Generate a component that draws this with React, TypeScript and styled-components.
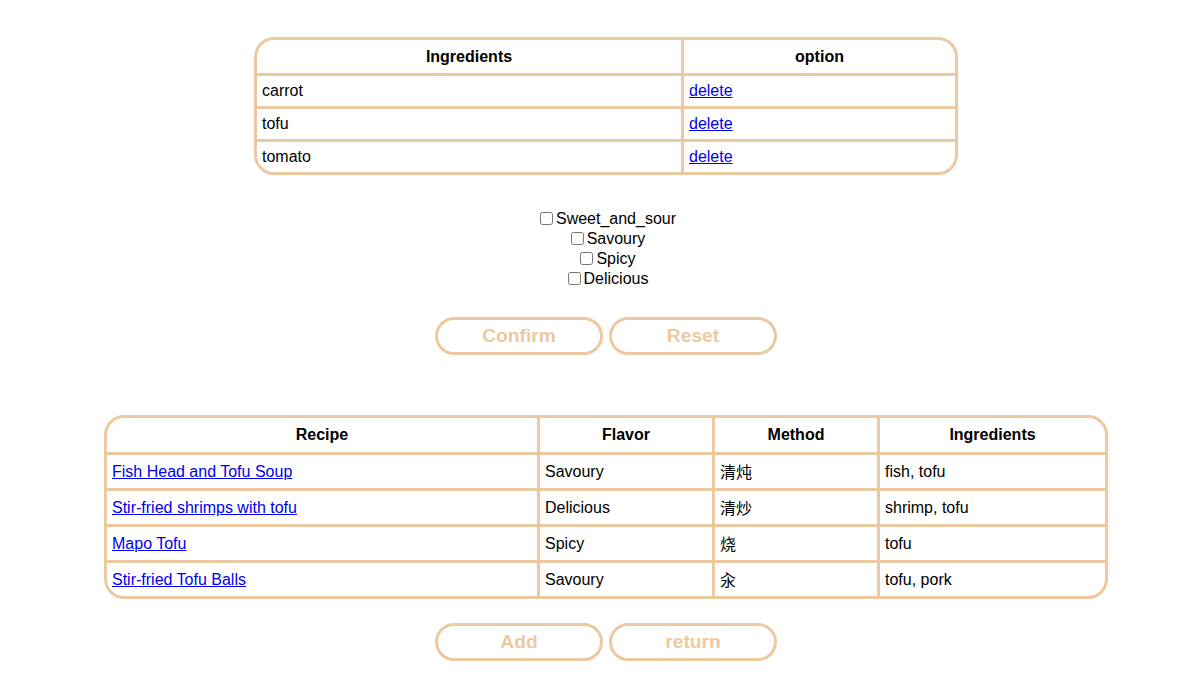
import React, { useState } from 'react';
import styled, { createGlobalStyle } from 'styled-components';

const beige = '#ecc9a1';

const GlobalStyle = createGlobalStyle`
  body {
    margin: 0;
    background: #fff;
    font-family: "Liberation Sans", Arial, "Noto Sans CJK SC", sans-serif;
    font-size: 16px;
    color: #000;
  }
`;

const Page = styled.div`
  display: flex;
  flex-direction: column;
  align-items: center;
  padding: 37px 0 16px 24px;
`;

const Table = styled.table<{ width: number }>`
  width: ${({ width }) => width}px;
  border: 3px solid ${beige};
  border-radius: 20px;
  border-spacing: 0;
  border-collapse: separate;
  table-layout: fixed;
  overflow: hidden;
`;

const HeadCell = styled.th<{ height: number }>`
  height: ${({ height }) => height}px;
  padding: 0 5px;
  font-weight: bold;
  text-align: center;
  border-right: 3px solid ${beige};
  border-bottom: 3px solid ${beige};

  &:last-child {
    border-right: none;
  }
`;

const Cell = styled.td<{ height: number }>`
  height: ${({ height }) => height}px;
  padding: 0 5px;
  text-align: left;
  border-right: 3px solid ${beige};
  border-bottom: 3px solid ${beige};

  &:last-child {
    border-right: none;
  }

  tr:last-child > & {
    border-bottom: none;
  }
`;

const Hanzi = styled.span`
  position: relative;
  top: -1px;
`;

const Link = styled.a`
  color: #0000ee;
  text-decoration: underline;
  cursor: pointer;
`;

const FlavorList = styled.div`
  margin-top: 34px;
  display: flex;
  flex-direction: column;
  align-items: center;
`;

const FlavorLabel = styled.label`
  display: block;
  line-height: 20px;
  height: 20px;
  text-align: center;

  input {
    margin: 3px 3px 3px 4px;
    vertical-align: -1px;
  }
`;

const ButtonRow = styled.div<{ top: number }>`
  display: flex;
  gap: 6px;
  margin-top: ${({ top }) => top}px;
`;

const PillButton = styled.button`
  width: 168px;
  height: 38px;
  border: 3px solid ${beige};
  border-radius: 20px;
  background: #fff;
  color: ${beige};
  font-family: "Liberation Sans", Arial, sans-serif;
  font-size: 19.2px;
  font-weight: bold;
  cursor: pointer;
  padding: 0;
`;

const BottomTableWrap = styled.div`
  margin-top: 60px;
`;

const flavors = ['Sweet_and_sour', 'Savoury', 'Spicy', 'Delicious'];

const recipes = [
  { name: 'Fish Head and Tofu Soup', flavor: 'Savoury', method: '清炖', ingredients: 'fish, tofu' },
  { name: 'Stir-fried shrimps with tofu', flavor: 'Delicious', method: '清炒', ingredients: 'shrimp, tofu' },
  { name: 'Mapo Tofu', flavor: 'Spicy', method: '烧', ingredients: 'tofu' },
  { name: 'Stir-fried Tofu Balls', flavor: 'Savoury', method: '汆', ingredients: 'tofu, pork' },
];

export default function App() {
  const [items, setItems] = useState(['carrot', 'tofu', 'tomato']);
  const [checked, setChecked] = useState<string[]>([]);

  const toggle = (f: string) =>
    setChecked(checked.includes(f) ? checked.filter((c) => c !== f) : [...checked, f]);

  return (
    <>
      <GlobalStyle />
      <Page>
        <Table width={704}>
          <colgroup>
            <col style={{ width: 427 }} />
            <col />
          </colgroup>
          <thead>
            <tr>
              <HeadCell height={33}>Ingredients</HeadCell>
              <HeadCell height={33}>option</HeadCell>
            </tr>
          </thead>
          <tbody>
            {items.map((item) => (
              <tr key={item}>
                <Cell height={30}>{item}</Cell>
                <Cell height={30}>
                  <Link onClick={() => setItems(items.filter((i) => i !== item))}>delete</Link>
                </Cell>
              </tr>
            ))}
          </tbody>
        </Table>

        <FlavorList>
          {flavors.map((f) => (
            <FlavorLabel key={f}>
              <input type="checkbox" checked={checked.includes(f)} onChange={() => toggle(f)} />
              {f}
            </FlavorLabel>
          ))}
        </FlavorList>

        <ButtonRow top={28}>
          <PillButton>Confirm</PillButton>
          <PillButton onClick={() => setChecked([])}>Reset</PillButton>
        </ButtonRow>

        <BottomTableWrap>
          <Table width={1004}>
            <colgroup>
              <col style={{ width: 433 }} />
              <col style={{ width: 175 }} />
              <col style={{ width: 165 }} />
              <col />
            </colgroup>
            <thead>
              <tr>
                <HeadCell height={34}>Recipe</HeadCell>
                <HeadCell height={34}>Flavor</HeadCell>
                <HeadCell height={34}>Method</HeadCell>
                <HeadCell height={34}>Ingredients</HeadCell>
              </tr>
            </thead>
            <tbody>
              {recipes.map((r) => (
                <tr key={r.name}>
                  <Cell height={33}>
                    <Link>{r.name}</Link>
                  </Cell>
                  <Cell height={33}>{r.flavor}</Cell>
                  <Cell height={33}>
                    <Hanzi>{r.method}</Hanzi>
                  </Cell>
                  <Cell height={33}>{r.ingredients}</Cell>
                </tr>
              ))}
            </tbody>
          </Table>
        </BottomTableWrap>

        <ButtonRow top={24}>
          <PillButton>Add</PillButton>
          <PillButton>return</PillButton>
        </ButtonRow>
      </Page>
    </>
  );
}
